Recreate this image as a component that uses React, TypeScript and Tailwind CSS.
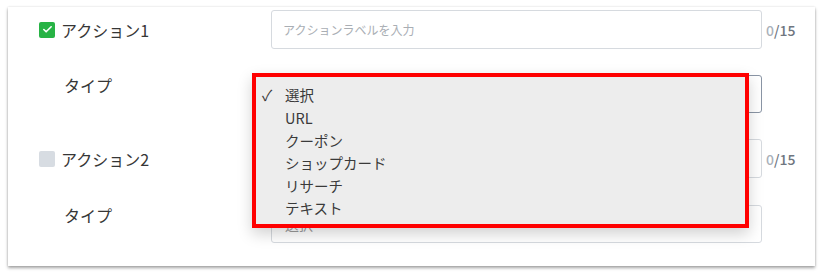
import { Check } from 'lucide-react';

const font = { fontFamily: '"Noto Sans CJK JP", "Noto Sans", sans-serif' };

const opciones = ['選択', 'URL', 'クーポン', 'ショップカード', 'リサーチ', 'テキスト'];

function Contador() {
  return (
    <div className="ml-[4px] text-[14px] font-medium leading-none">
      <span className="text-[#aab1ba]">0</span>
      <span className="text-[#6f7680]">/15</span>
    </div>
  );
}

function FilaAccion({ nombre, activo }: { nombre: string; activo: boolean }) {
  return (
    <div className="flex h-[39px] items-center">
      <div className="flex w-[232px] items-center">
        {activo ? (
          <div className="flex h-[16px] w-[16px] items-center justify-center rounded-[2px] bg-[#27b345]">
            <Check size={11} strokeWidth={3.5} className="text-white" />
          </div>
        ) : (
          <div className="h-[16px] w-[16px] rounded-[2px] bg-[#d7dce2]" />
        )}
        <span className="ml-[6px] text-[16px] text-[#363636]">{nombre}</span>
      </div>
      <div className="flex h-full w-[491px] items-center rounded-[3px] border border-[#d6dadf] bg-white px-[11px]">
        {activo && <span className="text-[12px] text-[#a9aeb4]">アクションラベルを入力</span>}
      </div>
      <Contador />
    </div>
  );
}

function FilaTipo({ foco }: { foco: boolean }) {
  return (
    <div className="flex h-[38px] items-start">
      <div className="w-[232px] pl-[25px] pt-[-2px] text-[16px] leading-[20px] text-[#363636]">タイプ</div>
      <div
        className={`flex h-full w-[491px] items-center rounded-[3px] border bg-white px-[13px] ${
          foco ? 'border-[#8a95a5]' : 'border-[#d6dadf]'
        }`}
      >
        <span className="text-[14px] text-[#9b9b9b]">選択</span>
      </div>
    </div>
  );
}

export default function App() {
  return (
    <div className="h-[279px] w-[823px] bg-white pl-[8px] pt-[7px]" style={font}>
      <div className="relative h-[259px] w-[807px] bg-white pl-[31px] pt-[3px] shadow-[0_2px_3px_rgba(0,0,0,0.35),0_0_2px_rgba(0,0,0,0.12)]">
        <FilaAccion nombre="アクション1" activo />
        <div className="mt-[26px]">
          <FilaTipo foco />
        </div>
        <div className="mt-[26px]">
          <FilaAccion nombre="アクション2" activo={false} />
        </div>
        <div className="mt-[27px]">
          <FilaTipo foco={false} />
        </div>

        {/* menú desplegable abierto */}
        <div className="absolute left-[244px] top-[66px] h-[155px] w-[497px] border-[4px] border-[#ff0000] bg-[#ededed] pt-[7px] shadow-[0_6px_14px_rgba(0,0,0,0.18)]">
          {opciones.map((op, i) => (
            <div key={op} className="flex h-[22.6px] items-center text-[14.5px] text-[#3a3a3a]">
              <span className="w-[29px] pl-[6px] text-[15px]">{i === 0 ? '✓' : ''}</span>
              <span>{op}</span>
            </div>
          ))}
        </div>
      </div>
    </div>
  );
}
